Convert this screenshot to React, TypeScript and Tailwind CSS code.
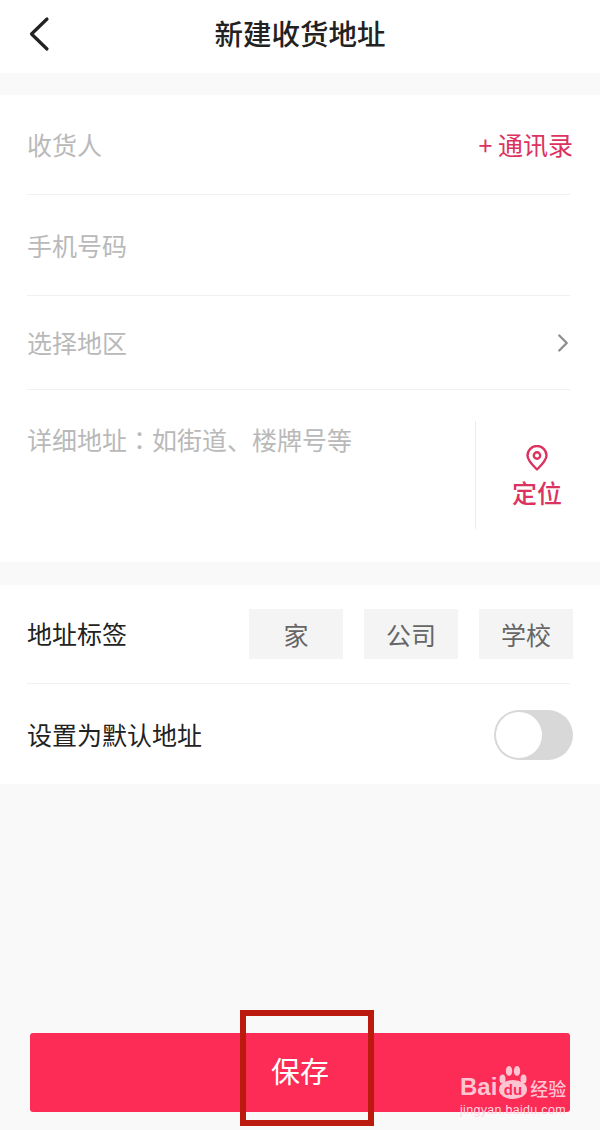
import { ChevronRight } from "lucide-react";

const cjk = "font-['Noto_Sans_CJK_SC','Noto_Sans',sans-serif]";

const Divider = () => <div className="ml-[27px] mr-[30px] h-px bg-[#f1f1f1]" />;

const Tag = ({ label }: { label: string }) => (
  <div className="flex h-[50px] w-[94px] items-center justify-center bg-[#f4f4f4] pt-[1px] text-[25px] text-[#666666]">
    {label}
  </div>
);

const App = () => {
  return (
    <div className={`relative flex h-[1130px] w-[600px] flex-col overflow-hidden bg-[#f9f9fa] ${cjk}`}>
      {/* header */}
      <div className="relative flex h-[73px] items-center justify-center bg-white pb-[6px]">
        <svg className="absolute left-[26px] top-[16px] h-[36px] w-[24px]" viewBox="0 0 24 36" fill="none">
          <path d="M21 3 L5.5 18 L21 33" stroke="#222222" strokeWidth="3.2" strokeLinecap="round" strokeLinejoin="round" />
        </svg>
        <span className="text-[28.5px] font-medium leading-none text-[#222222]">新建收货地址</span>
      </div>

      {/* address form */}
      <div className="mt-[22px] bg-white">
        <div className="flex h-[99px] items-center justify-between pl-[27px] pr-[27px] text-[25px]">
          <span className="text-[#b9b9b9]">收货人</span>
          <span className="text-[#dc3260]">+ 通讯录</span>
        </div>
        <Divider />
        <div className="flex h-[100px] items-center pl-[27px] pt-[2px] text-[25px] text-[#b9b9b9]">手机号码</div>
        <Divider />
        <div className="flex h-[93px] items-center justify-between pl-[27px] pr-[22px] text-[25px] text-[#b9b9b9]">
          <span>选择地区</span>
          <ChevronRight className="h-[30px] w-[30px] text-[#8e8e8e]" strokeWidth={1.9} />
        </div>
        <Divider />
        <div className="flex h-[172px] pl-[27px]">
          <div className="flex-1 pt-[31px] text-[25px] leading-[36px] text-[#b9b9b9]">
            详细地址<span className="font-['Noto_Sans_CJK_TC',sans-serif]">：</span>如街道、楼牌号等
          </div>
          <div className="mt-[31px] flex h-[108px] w-[125px] flex-col items-center border-l border-[#ececec] pr-[2px] pt-[25px]">
            <svg className="h-[26px] w-[22px] -translate-y-[1px]" viewBox="0 0 22 26" fill="none" stroke="#dc3260" strokeWidth="2.4">
              <path d="M11 24.5 C7 20.5 1.5 15.5 1.5 10.5 A9.5 9.5 0 0 1 20.5 10.5 C20.5 15.5 15 20.5 11 24.5 Z" strokeLinejoin="round" />
              <circle cx="11" cy="10.5" r="3.2" />
            </svg>
            <span className="mt-[2px] text-[25px] font-medium leading-[36px] text-[#dc3260]">定位</span>
          </div>
        </div>
      </div>

      {/* tags and default switch */}
      <div className="mt-[23px] bg-white">
        <div className="flex h-[98px] items-center justify-between pl-[27px] pr-[27px]">
          <span className="text-[25px] text-[#222222]">地址标签</span>
          <div className="flex gap-[21px]">
            <Tag label="家" />
            <Tag label="公司" />
            <Tag label="学校" />
          </div>
        </div>
        <Divider />
        <div className="flex h-[100px] items-center justify-between pl-[27px] pr-[27px]">
          <span className="pt-[2px] text-[25px] text-[#222222]">设置为默认地址</span>
          <div className="mt-[2px] flex h-[50px] w-[79px] items-center rounded-full bg-[#d8d8d8] p-[2px]">
            <div className="h-[46px] w-[46px] rounded-full bg-white" />
          </div>
        </div>
      </div>

      {/* save button */}
      <div className="mx-[30px] mt-[249px] flex h-[79px] items-center justify-center rounded-[3px] bg-[#fd2c56] pb-[3px] text-[29px] text-white">
        保存
      </div>

      {/* red annotation box */}
      <div className="absolute left-[240px] top-[1010px] h-[116px] w-[134px] border-[6px] border-[#bc1a0e]" />

      {/* watermark */}
      <div className="absolute left-[460px] top-[1064px] flex w-[112px] flex-col text-[#ffc4d2]">
        <div className="flex h-[38px] items-end font-['Liberation_Sans',sans-serif] text-[24px] font-bold leading-[30px]">
          <span>Bai</span>
          <svg className="ml-[1px] h-[38px] w-[30px]" viewBox="0 0 30 38" fill="#ffc4d2">
            <ellipse cx="4.5" cy="15" rx="3" ry="4.5" />
            <ellipse cx="11" cy="7" rx="3.2" ry="5" />
            <ellipse cx="19" cy="7" rx="3.2" ry="5" />
            <ellipse cx="25.5" cy="15" rx="3" ry="4.5" />
            <ellipse cx="15" cy="25.5" rx="14" ry="9.5" />
            <text x="15" y="31" textAnchor="middle" fontSize="15" fontWeight="700" fill="#fd2c56">du</text>
          </svg>
          <span className={`ml-[2px] text-[18px] font-medium leading-[28px] ${cjk}`}>经验</span>
        </div>
        <span className="mt-[1px] whitespace-nowrap font-['Liberation_Sans',sans-serif] text-[12.5px] leading-[14px] tracking-[0.3px] text-[#ffd6df]">jingyan.baidu.com</span>
      </div>
    </div>
  );
};

export default App;
